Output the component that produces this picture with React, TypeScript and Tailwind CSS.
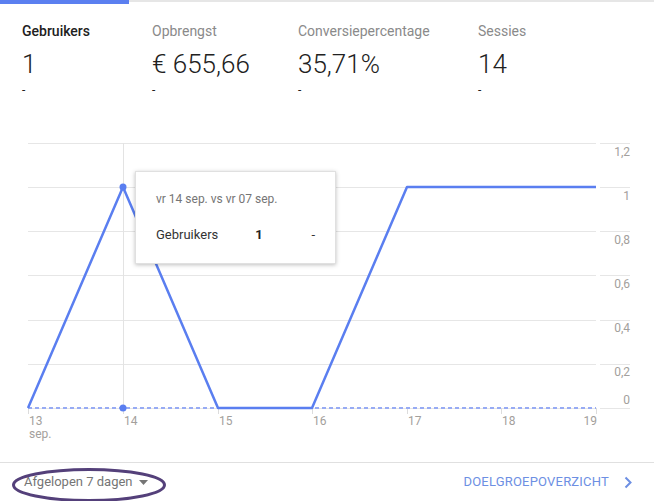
import React from 'react'

interface Metric {
  label: string
  value: string
  active?: boolean
  width: string
}

const metrics: Metric[] = [
  { label: 'Gebruikers', value: '1', active: true, width: 'w-[130px]' },
  { label: 'Opbrengst', value: '€ 655,66', width: 'w-[146px]' },
  { label: 'Conversiepercentage', value: '35,71%', width: 'w-[180px]' },
  { label: 'Sessies', value: '14', width: 'w-[120px]' }
]

const xs = [28, 123, 218, 312, 407, 501, 596]
const ys = [0, 1, 0, 0, 1, 1, 1]
const days = ['13', '14', '15', '16', '17', '18', '19']
const grid = [13, 57, 101, 145, 190, 234, 278]
const axis = [
  { t: '1,2', y: 26 },
  { t: '1', y: 70 },
  { t: '0,8', y: 114 },
  { t: '0,6', y: 158 },
  { t: '0,4', y: 202 },
  { t: '0,2', y: 246 },
  { t: '0', y: 274 }
]

const toY = (v: number) => 278 - v * 221

const Chart: React.FC = () => {
  const points = xs.map((x, i) => `${x},${toY(ys[i])}`).join(' ')
  return (
    <svg width="654" height="332" className="block">
      {grid.map(y => (
        <g key={y}>
          <line x1="28" x2="596" y1={y + 0.5} y2={y + 0.5} stroke="#e6e6e6" strokeWidth="1" />
          <line x1="600" x2="630" y1={y + 0.5} y2={y + 0.5} stroke="#e6e6e6" strokeWidth="1" />
        </g>
      ))}
      {axis.map(a => (
        <text key={a.t} x="630" y={a.y} textAnchor="end" fontSize="12" fill="#a3a09c" fontFamily="Roboto, sans-serif">
          {a.t}
        </text>
      ))}
      <line x1="123.5" x2="123.5" y1="13" y2="278" stroke="#e3e3e3" strokeWidth="1" />
      {xs.map(x => (
        <line key={x} x1={x + 0.5} x2={x + 0.5} y1="278" y2="284" stroke="#dcdcdc" strokeWidth="1" />
      ))}
      {days.map((d, i) => (
        <text
          key={d}
          x={i === 6 ? 597 : xs[i] + 1}
          y="295"
          textAnchor={i === 6 ? 'end' : 'start'}
          fontSize="12"
          fill="#a3a09c"
          fontFamily="Roboto, sans-serif"
        >
          {d}
        </text>
      ))}
      <text x="29" y="308" fontSize="12" fill="#a3a09c" fontFamily="Roboto, sans-serif">
        sep.
      </text>
      <line x1="28" x2="596" y1="278" y2="278" stroke="#97abf4" strokeWidth="2" strokeDasharray="4 3" />
      <polyline points={points} fill="none" stroke="#5a7ef0" strokeWidth="2.5" strokeLinejoin="round" />
      <circle cx="123" cy="57" r="3.5" fill="#5a7ef0" />
      <circle cx="123" cy="278" r="3.5" fill="#5a7ef0" />
    </svg>
  )
}

export default function App() {
  return (
    <div className="w-[654px] h-[501px] overflow-hidden bg-white flex flex-col font-['Roboto',sans-serif]">
      <div className="flex items-start h-[4px]">
        <div className="w-[129px] h-[4px] bg-[#5b7ff0]" />
        <div className="flex-1 h-[2px] bg-[#e6e6e6]" />
      </div>
      <div className="flex pl-[22px] pt-[18px] h-[106px]">
        {metrics.map(m => (
          <div key={m.label} className={`${m.width} flex flex-col`}>
            <div
              className={
                m.active
                  ? 'text-[14px] leading-[18px] font-medium text-[#212121]'
                  : 'text-[14px] leading-[18px] text-[#8a8a8a]'
              }
            >
              {m.label}
            </div>
            <div className="mt-[8px] text-[26px] leading-[32px] font-light text-[#212121]">{m.value}</div>
            <div className="mt-[3px] text-[12px] leading-[14px] text-[#212121]">-</div>
          </div>
        ))}
      </div>
      <div className="relative mt-[20px]">
        <Chart />
        <div className="absolute left-[135px] top-[41px] w-[201px] h-[93px] bg-white border border-[#e0e0e0] shadow-[0_1px_4px_rgba(0,0,0,0.25)] px-[20px] pt-[20px]">
          <div className="text-[12px] leading-[14px] text-[#757575]">vr 14 sep. vs vr 07 sep.</div>
          <div className="flex items-center mt-[21px] text-[13px] leading-[16px] text-[#333]">
            <span className="w-[101px]">Gebruikers</span>
            <span className="w-[57px] font-bold text-[#222]">1</span>
            <span>-</span>
          </div>
        </div>
      </div>
      <div className="relative border-t border-[#e0e0e0] flex-1 flex items-center justify-between pl-[24px] pr-[22px]">
        <div className="flex items-center gap-[6px] text-[13px] text-[#757575]">
          <span>Afgelopen 7 dagen</span>
          <svg width="9" height="5" viewBox="0 0 9 5">
            <path d="M0 0 L9 0 L4.5 5 Z" fill="#757575" />
          </svg>
        </div>
        <svg className="absolute left-[11px] top-[4px]" width="156" height="36" viewBox="0 0 156 36">
          <ellipse cx="78" cy="18" rx="75.5" ry="15.5" fill="none" stroke="#54407a" strokeWidth="3" />
        </svg>
        <div className="flex items-center gap-[15px]">
          <span className="text-[13px] text-[#6d8fe3] tracking-[0.2px]">DOELGROEPOVERZICHT</span>
          <svg width="8" height="13" viewBox="0 0 8 13">
            <path d="M1.5 1.5 L6.5 6.5 L1.5 11.5" fill="none" stroke="#6d8fe3" strokeWidth="2" />
          </svg>
        </div>
      </div>
    </div>
  )
}
